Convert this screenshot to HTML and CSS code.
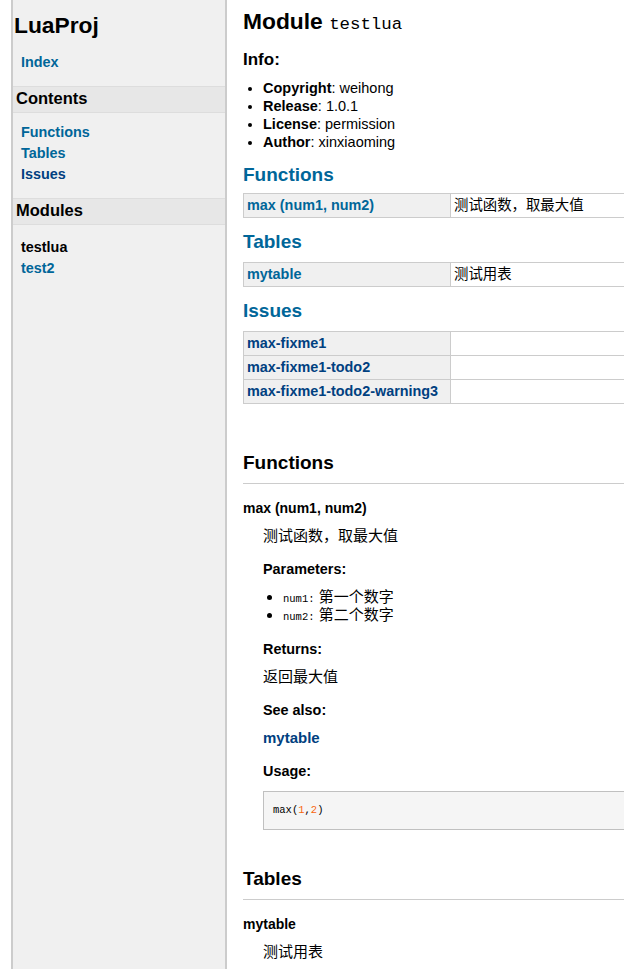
FILE: index.html
```html
<!DOCTYPE html>
<html lang="zh">
<head>
<meta charset="utf-8">
<title>testlua - LuaProj</title>
<link rel="stylesheet" href="styles.css">
</head>
<body>
<div class="container">
  <div class="main">
    <div class="nav">
      <h1 class="brand">LuaProj</h1>
      <ul class="nav-list nav-index">
        <li><a class="lk-v" href="#">Index</a></li>
      </ul>
      <h2 class="nav-head">Contents</h2>
      <ul class="nav-list nav-contents">
        <li><a class="lk-v" href="#Functions">Functions</a></li>
        <li><a class="lk-v" href="#Tables">Tables</a></li>
        <li><a class="lk" href="#Issues">Issues</a></li>
      </ul>
      <h2 class="nav-head">Modules</h2>
      <ul class="nav-list nav-modules">
        <li><strong>testlua</strong></li>
        <li><a class="lk-v" href="#">test2</a></li>
      </ul>
    </div>
    <div class="content">
      <h1 class="title">Module <code class="title-code">testlua</code></h1>
      <h3 class="info-head">Info:</h3>
      <ul class="info">
        <li><strong>Copyright</strong>: weihong</li>
        <li><strong>Release</strong>: 1.0.1</li>
        <li><strong>License</strong>: permission</li>
        <li><strong>Author</strong>: xinxiaoming</li>
      </ul>

      <h2 class="sum-head sum-first"><a class="lk-v" href="#Functions">Functions</a></h2>
      <table class="ftable">
        <tr><td class="name"><a class="lk-v" href="#max">max (num1, num2)</a></td><td class="summary">测试函数，取最大值</td></tr>
      </table>

      <h2 class="sum-head"><a class="lk-v" href="#Tables">Tables</a></h2>
      <table class="ftable">
        <tr><td class="name"><a class="lk-v" href="#mytable">mytable</a></td><td class="summary">测试用表</td></tr>
      </table>

      <h2 class="sum-head"><a class="lk-v" href="#Issues">Issues</a></h2>
      <table class="ftable">
        <tr><td class="name"><a class="lk" href="#max-fixme1">max-fixme1</a></td><td class="summary"></td></tr>
        <tr><td class="name"><a class="lk" href="#max-fixme1-todo2">max-fixme1-todo2</a></td><td class="summary"></td></tr>
        <tr><td class="name"><a class="lk" href="#max-fixme1-todo2-warning3">max-fixme1-todo2-warning3</a></td><td class="summary"></td></tr>
      </table>

      <h2 class="sec-head sec-first" id="Functions">Functions</h2>
      <dl class="func">
        <dt id="max">max (num1, num2)</dt>
        <dd>
          <p class="desc">测试函数，取最大值</p>
          <h3 class="sub">Parameters:</h3>
          <ul class="params">
            <li><span class="param">num1</span> 第一个数字</li>
            <li><span class="param">num2</span> 第二个数字</li>
          </ul>
          <h3 class="sub">Returns:</h3>
          <p class="ret">返回最大值</p>
          <h3 class="sub">See also:</h3>
          <p class="see"><a class="lk" href="#mytable">mytable</a></p>
          <h3 class="sub">Usage:</h3>
          <pre class="code">max(<span class="num">1</span>,<span class="num">2</span>)</pre>
        </dd>
      </dl>

      <h2 class="sec-head" id="Tables">Tables</h2>
      <dl class="func">
        <dt id="mytable">mytable</dt>
        <dd>
          <p class="desc">测试用表</p>
        </dd>
      </dl>
    </div>
  </div>
</div>
</body>
</html>
```

FILE: styles.css
```css
html {
  overflow: hidden;
}

body {
  margin: 0;
  background: #ffffff;
  color: #000000;
  font-family: "Liberation Sans", Arial, "Noto Sans CJK SC", sans-serif;
  font-size: 14.4px;
  line-height: 18px;
}

a {
  text-decoration: none;
  font-weight: bold;
}

.lk {
  color: #004080;
}

.lk-v {
  color: #006699;
}

.container {
  margin-left: 11px;
}

.main {
  display: flex;
  border-left: 2px solid #cccccc;
  background: #f0f0f0;
}

/* sidebar */
.nav {
  flex: none;
  width: 212px;
}

.brand {
  margin: 11px 0 0 1px;
  font-size: 22.8px;
  line-height: 28px;
  font-weight: bold;
}

.nav-list {
  list-style: none;
  margin: 0;
  padding: 0 0 0 8px;
  font-size: 14.4px;
  line-height: 18px;
}

.nav-list li {
  padding-top: 3px;
}

.nav-index {
  margin-top: 11px;
}

.nav-head {
  margin: 15px 0 0;
  padding: 1px 3px 4px;
  font-size: 16.5px;
  line-height: 20px;
  font-weight: bold;
  color: #000000;
  background: #e7e7e7;
  border-top: 1px solid #dddddd;
  border-bottom: 1px solid #dddddd;
}

.nav-contents {
  margin-top: 7px;
}

.nav-modules {
  margin-top: 10px;
}

/* content */
.content {
  flex: none;
  width: 668px;
  padding: 0 16px 80px;
  border-left: 2px solid #cccccc;
  background: #ffffff;
}

.title {
  margin: 7px 0 0;
  font-size: 22.8px;
  line-height: 28px;
  font-weight: bold;
}

.title-code {
  font-family: "Liberation Mono", monospace;
  font-weight: normal;
  font-size: 17.4px;
  line-height: 1;
}

.info-head {
  margin: 15px 0 0;
  font-size: 17px;
  line-height: 20px;
  font-weight: bold;
}

.info {
  margin: 9px 0 0;
  padding-left: 20px;
  font-size: 14.5px;
  line-height: 18px;
}

.sum-head {
  margin: 12px 0 9px;
  font-size: 19px;
  line-height: 23px;
  font-weight: bold;
}

.sum-first {
  margin-bottom: 7px;
}

.ftable {
  width: 100%;
  border-collapse: collapse;
  border: 1px solid #cccccc;
  font-size: 14.4px;
  line-height: 17px;
}

.ftable td {
  border: 1px solid #cccccc;
  padding: 3px;
  text-align: left;
  vertical-align: top;
}

.ftable td.name {
  width: 200px;
  background: #f0f0f0;
  white-space: nowrap;
}

.sec-head {
  margin: 37px 0 9px;
  font-size: 19px;
  line-height: 23px;
  font-weight: bold;
}

.sec-first {
  margin-top: 47px;
}

.func {
  margin: 0;
}

.func dt {
  border-top: 1px solid #cccccc;
  padding-top: 15px;
  font-size: 14px;
  line-height: 18px;
  font-weight: bold;
}

.func dd {
  margin: 10px 0 0 20px;
}

.desc {
  margin: 0;
  font-size: 15px;
  line-height: 18px;
}

.sub {
  margin: 15px 0 0;
  font-size: 14.4px;
  line-height: 18px;
  font-weight: bold;
}

.params {
  margin: 10px 0 0;
  padding: 0 0 1px 20px;
  font-size: 15px;
  line-height: 18px;
}

.param {
  font-family: "Liberation Mono", monospace;
  font-size: 10.5px;
  line-height: 1;
}

.param::after {
  content: ":";
}

.ret {
  margin: 10px 0 0;
  font-size: 15px;
  line-height: 18px;
}

.see {
  margin: 10px 0 0;
  font-size: 15px;
  line-height: 18px;
}

.code {
  margin: 11px 0 0;
  padding: 10px 9px;
  background: #f5f5f5;
  border: 1px solid #c0c0c0;
  font-family: "Liberation Mono", monospace;
  font-size: 10.5px;
  line-height: 17px;
}

.num {
  color: #f8660d;
}
```
